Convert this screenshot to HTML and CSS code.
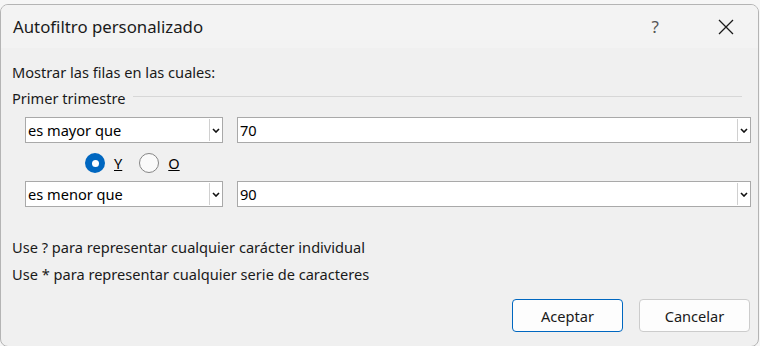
FILE: index.html
```html
<!DOCTYPE html>
<html lang="es">
<head>
<meta charset="utf-8">
<link rel="stylesheet" href="styles.css">
</head>
<body>
<div class="window">
  <div class="titlebar">
    <span class="title">Autofiltro personalizado</span>
    <span class="help">?</span>
    <svg class="close" width="16" height="16" viewBox="0 0 16 16"><path d="M1 1L15 15M15 1L1 15" stroke="#1a1a1a" stroke-width="1.3" fill="none"/></svg>
  </div>
  <div class="content">
    <div class="line">Mostrar las filas en las cuales:</div>
    <div class="group-head"><span>Primer trimestre</span><span class="rule"></span></div>
    <div class="row">
      <div class="combo op"><span class="val">es mayor que</span><span class="arrow"><svg width="8" height="5" viewBox="0 0 8 5"><path d="M1 1L4 4L7 1" stroke="#111" stroke-width="1.6" fill="none"/></svg></span></div>
      <div class="combo value"><span class="val">70</span><span class="arrow"><svg width="8" height="5" viewBox="0 0 8 5"><path d="M1 1L4 4L7 1" stroke="#111" stroke-width="1.6" fill="none"/></svg></span></div>
    </div>
    <div class="radios">
      <span class="radio on"></span><span class="rlabel">Y</span>
      <span class="radio off"></span><span class="rlabel">O</span>
    </div>
    <div class="row">
      <div class="combo op"><span class="val">es menor que</span><span class="arrow"><svg width="8" height="5" viewBox="0 0 8 5"><path d="M1 1L4 4L7 1" stroke="#111" stroke-width="1.6" fill="none"/></svg></span></div>
      <div class="combo value"><span class="val">90</span><span class="arrow"><svg width="8" height="5" viewBox="0 0 8 5"><path d="M1 1L4 4L7 1" stroke="#111" stroke-width="1.6" fill="none"/></svg></span></div>
    </div>
    <div class="hint first">Use ? para representar cualquier carácter individual</div>
    <div class="hint">Use * para representar cualquier serie de caracteres</div>
    <div class="buttons">
      <button class="btn primary">Aceptar</button>
      <button class="btn">Cancelar</button>
    </div>
  </div>
</div>
</body>
</html>
```
FILE: styles.css
```css
html, body {
  margin: 0;
  padding: 0;
  background: #f6f6f6;
}
body {
  font-family: "Noto Sans", "Open Sans", sans-serif;
  font-size: 14.6px;
  color: #1a1a1a;
}
.window {
  margin-top: 4px;
  width: 757px;
  height: 341px;
  border: 1px solid #b4b4b4;
  border-radius: 8px;
  background: #f0f0f0;
  overflow: hidden;
  display: flex;
  flex-direction: column;
}
.titlebar {
  height: 43px;
  background: #f3f3f3;
  display: flex;
  align-items: center;
  padding-left: 12px;
  flex-shrink: 0;
}
.title {
  font-size: 16.8px;
  color: #1a1a1a;
  flex: 1;
}
.help {
  font-size: 17px;
  color: #555;
  margin-right: 59px;
}
.close {
  margin-right: 24px;
}
.content {
  padding: 14px 0 0 11px;
  display: flex;
  flex-direction: column;
}
.line {
  line-height: 20px;
}
.group-head {
  display: flex;
  align-items: center;
  margin-top: 6px;
  line-height: 20px;
}
.rule {
  flex: 1;
  height: 1px;
  background: #d7d7d7;
  margin: 0 16px 0 8px;
  position: relative;
  top: -2px;
}
.row {
  display: flex;
  gap: 14px;
  margin-left: 13px;
  margin-top: 9px;
}
.radios + .row {
  margin-top: 8px;
}
.combo {
  height: 24px;
  border: 1px solid #a9a9a9;
  background: #fff;
  display: flex;
  align-items: center;
}
.combo.op { width: 196px; }
.combo.value { width: 512px; }
.val {
  flex: 1;
  padding-left: 2px;
  color: #000;
}
.arrow {
  width: 12px;
  height: 22px;
  border-left: 1px solid #d0d0d0;
  display: flex;
  align-items: center;
  justify-content: center;
}
.radios {
  display: flex;
  align-items: center;
  margin-top: 10px;
  margin-left: 73px;
  height: 20px;
}
.radio {
  width: 20px;
  height: 20px;
  border-radius: 50%;
  box-sizing: border-box;
}
.radio.on {
  background: #0067c0;
  display: flex;
  align-items: center;
  justify-content: center;
}
.radio.on::after {
  content: "";
  width: 7px;
  height: 7px;
  border-radius: 50%;
  background: #fff;
}
.radio.off {
  border: 1px solid #858585;
  background: #fafafa;
}
.rlabel {
  text-decoration: underline;
  margin: 0 17px 0 9px;
  color: #000;
}
.hint {
  line-height: 20px;
  margin-top: 7px;
}
.hint.first {
  margin-top: 30px;
}
.buttons {
  display: flex;
  justify-content: flex-end;
  gap: 16px;
  margin-top: 15px;
  padding-right: 8px;
}
.btn {
  width: 111px;
  height: 33px;
  border: 1px solid #cccccc;
  border-radius: 4px;
  background: #fdfdfd;
  font-family: inherit;
  font-size: 14.6px;
  color: #1a1a1a;
  padding: 0;
}
.btn.primary {
  border-color: #0067c0;
}
```
